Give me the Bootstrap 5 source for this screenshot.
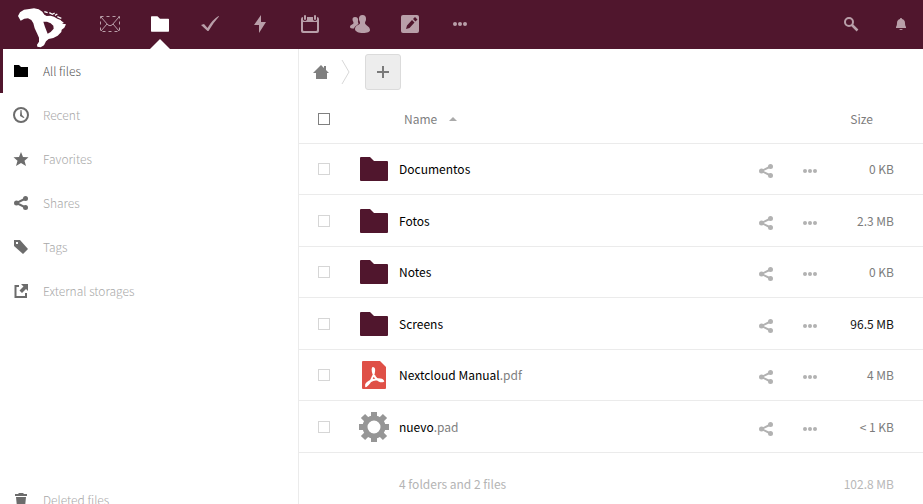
<!DOCTYPE html>
<html lang="en">
<head>
<meta charset="utf-8">
<meta name="viewport" content="width=device-width, initial-scale=1">
<title>Files</title>
<link rel="stylesheet" href="https://cdn.jsdelivr.net/npm/bootstrap@5.3.0/dist/css/bootstrap.min.css">
<style>
  body { font-family: "Noto Sans CJK SC", "Noto Sans", sans-serif; font-size: 12px; line-height: 20px; color: #000; }
  svg { display: block; flex: none; }
  .topbar { height: 49px; background: #50162d; }
  .brand-link { width: 85px; padding: 8px 0 0 18px; }
  .app-link, .tool { height: 49px; padding-bottom: 1px; color: #b99fa9; }
  .app-link { width: 50px; }
  .app-link.active { color: #fff; }
  .app-link.active::after { content: ""; position: absolute; bottom: 0; left: 50%; margin-left: -10px; border: 10px solid transparent; border-top-width: 0; border-bottom-color: #fff; }
  .tool { width: 44px; }
  .tools { gap: 6px; }
  .sidebar { width: 299px; border-right: 1px solid #ebebeb; }
  .side-link { height: 44px; padding-left: 10px; gap: 14px; border-left: 3px solid transparent; font-weight: 300; color: #a8a8a8; }
  .side-link svg { color: #6c6c6c; }
  .side-link.active { border-color: #50162d; color: #555; }
  .side-link.active svg { color: #000; }
  .side-foot { height: 26px; }
  .crumbs { height: 45px; padding: 0 14px; color: #7f7f7f; }
  .new-btn { width: 36px; height: 36px; margin-left: 12px; background: #ededed; border: 1px solid #dbdbdb; border-radius: 3px; color: #7a7a7a; }
  .files { table-layout: fixed; color: #000; }
  .files th, .files td { padding: 1px 0 0; vertical-align: middle; border-bottom: 1px solid #ebebeb; }
  .files thead tr { height: 49px; }
  .files tbody tr { height: 51px; }
  .files tbody tr:nth-child(even) { height: 52px; }
  .files tfoot tr { height: 62px; color: #b4b4b4; }
  .files tfoot td { border: 0; }
  .c-check { width: 50px; }
  .c-icon { width: 50px; }
  .c-act { width: 88px; }
  .c-size { width: 91px; }
  .tick { appearance: none; display: block; width: 12px; height: 12px; margin: 0 0 0 19px; border: 1px solid #d6d6d6; background: #fff; }
  .tick.all { border-color: #808080; }
  .tick:checked { background: #50162d; }
  .sort { gap: 12px; margin-left: 5px; font-size: 12px; line-height: 20px; color: #808080; }
  .files .size { padding-right: 29px; text-align: right; color: #7c7c7c; }
  .files thead .size { padding-right: 50px; }
  .files .size.large { color: #111; }
  .files tfoot .size { color: #b8b8b8; }
  .ext { color: #808080; }
  .act { width: 44px; height: 44px; color: #b2b2b2; }
  .maroon { color: #50162d; }
</style>
<script src="https://cdn.jsdelivr.net/npm/bootstrap@5.3.0/dist/js/bootstrap.bundle.min.js"></script>
</head>
<body class="vh-100 d-flex flex-column overflow-hidden">
<svg class="d-none" aria-hidden="true">
  <symbol id="folder" viewBox="0 0 28 24"><path fill="currentColor" d="M1 0h9l4 4h13q1 0 1 1v18q0 1-1 1H1q-1 0-1-1V1q0-1 1-1z"/></symbol>
  <symbol id="share" viewBox="0 0 16 16"><path d="M12.500 3.500L3.500 8l9 4.500" fill="none" stroke="currentColor" stroke-width="2"/><g fill="currentColor"><circle cx="12.500" cy="3.500" r="2.500"/><circle cx="3.500" cy="8" r="2.500"/><circle cx="12.500" cy="12.500" r="2.500"/></g></symbol>
  <symbol id="dots" viewBox="0 0 16 16"><g fill="currentColor"><circle cx="3" cy="8" r="2"/><circle cx="8" cy="8" r="2"/><circle cx="13" cy="8" r="2"/></g></symbol>
</svg>
<header class="topbar d-flex flex-shrink-0">
  <a class="brand-link" href="#" aria-label="Home">
    <svg width="48" height="40" viewBox="54 25 144 120"><path fill="#fff" fill-rule="evenodd" d="M54 49L60 38 72 30 88 28 102 26 116 29 127 36 133 45 140 49 152 48 162 51 172 57 182 61 188 72 198 74 193 84 185 90 184 97 173 108 160 115 146 118 138 125 132 137 122 143 112 141 111 135 117 126 117 114 111 101 104 86 100 71 94 61 84 56 73 57 62 63zM130 66L135 82 143 102 152 97 161 87 160 78 152 71 141 66z"/><path fill="none" stroke="#fff" stroke-width="4" d="M133 36l10 3M148 39l9 5 7-4M165 47l7-4M172 51l12 5M182 65l8 5M178 71l13 11"/></svg>
  </a>
  <nav class="d-flex" aria-label="Apps">
    <a class="app-link d-flex align-items-center justify-content-center" href="#" aria-label="Mail"><svg width="20" height="16" viewBox="0 0 20 16" fill="none" stroke="currentColor"><path d="M.500 .500h19v15H.500z" stroke-dasharray="3 3"/><path d="M1 1l7 8q2 1.500 4 0l7-8M1 15l6-7M19 15l-6-7"/></svg></a>
    <a class="app-link active position-relative d-flex align-items-center justify-content-center" href="#" aria-label="Files" aria-current="page"><svg width="18" height="16"><use href="#folder"/></svg></a>
    <a class="app-link d-flex align-items-center justify-content-center" href="#" aria-label="Tasks"><svg width="20" height="18" viewBox="0 0 20 18"><path fill="currentColor" d="M1 10l3-1 3.500 4Q12 5 18.500 1l.5.500Q13 8 8.500 16H7.500z"/></svg></a>
    <a class="app-link d-flex align-items-center justify-content-center" href="#" aria-label="Activity"><svg width="14" height="20" viewBox="0 0 14 20"><path fill="currentColor" d="M8 1L1 11h5l0 8 7-11H8z"/></svg></a>
    <a class="app-link d-flex align-items-center justify-content-center" href="#" aria-label="Calendar"><svg width="18" height="18" viewBox="0 0 18 18"><path fill="currentColor" fill-rule="evenodd" d="M2 2h0v3q2 2 4 0V2h6v3q2 2 4 0V2q2 0 2 2v12q0 2-2 2H2q-2 0-2-2V4q0-2 2-2zM2 7v8q0 1 1 1h12q1 0 1-1V7z"/><path stroke="currentColor" stroke-width="2" stroke-linecap="round" d="M4 1v3M14 1v3"/></svg></a>
    <a class="app-link d-flex align-items-center justify-content-center" href="#" aria-label="Contacts"><svg width="20" height="20" viewBox="0 0 20 20"><path fill="currentColor" d="M12.500 1c-2.500 0-4 1.800-3.500 4.500.2 1.500 1 2 1 3.500 0 2-5 2-5 6 0 2.500 3.500 4 8 4s7-1 7-3c0-4-5-4.500-5-7 0-1.500 1-2 1-3.500.4-2.700-1-4.500-3.500-4.500zM5 3C3 3 2.500 4.300 2.500 5.500 2.500 7 3.500 7.500 3.500 9c0 1.500-3.500 1.500-3.500 4 0 1 1.500 1.500 4 1.500 1-3 4-3.500 4.500-5 0-1-.8-1-.5-2.500.6-2.500-.7-4-3-4z"/></svg></a>
    <a class="app-link d-flex align-items-center justify-content-center" href="#" aria-label="Notes"><svg width="18" height="18" viewBox="0 0 18 18"><rect width="18" height="18" rx="2" fill="currentColor"/><path fill="#50162d" d="M14 2l2.500 2.500-2 2L12 4zM11 5l2.500 2.500L8.500 13 5 14l1-3.500z"/></svg></a>
    <a class="app-link d-flex align-items-center justify-content-center" href="#" aria-label="More apps"><svg width="16" height="16"><use href="#dots"/></svg></a>
  </nav>
  <div class="tools d-flex ms-auto">
    <button class="tool btn pt-0 px-0 border-0 d-flex align-items-center justify-content-center" aria-label="Search"><svg width="16" height="16" viewBox="0 0 16 16" fill="none" stroke="currentColor" stroke-width="2"><circle cx="6" cy="6" r="4"/><path stroke-width="2.500" d="M9 9l5.500 5.500"/></svg></button>
    <button class="tool btn pt-0 px-0 border-0 d-flex align-items-center justify-content-center" aria-label="Notifications"><svg width="12" height="14" viewBox="0 0 12 14"><path fill="currentColor" d="M6 1C5.300 1 5 1.500 5 2 3 2.500 2 4 2 6 2 8 1.500 9 1 10v1h10v-1C10.500 9 10 8 10 6 10 4 9 2.500 7 2 7 1.500 6.700 1 6 1zM4 12h4q-2 2-4 0z"/></svg></button>
  </div>
</header>
<div class="d-flex flex-grow-1 overflow-hidden">
  <nav class="sidebar d-flex flex-column flex-shrink-0" aria-label="Views">
    <a class="side-link active d-flex align-items-center text-decoration-none" href="#"><svg width="16" height="16" viewBox="0 0 16 16"><path fill="currentColor" d="M1 2h5l2 2h7v10H1z"/></svg>All files</a>
    <a class="side-link d-flex align-items-center text-decoration-none" href="#"><svg width="16" height="16" viewBox="0 0 16 16"><circle cx="8" cy="8" r="7" fill="none" stroke="currentColor" stroke-width="2"/><path fill="currentColor" d="M7.500 3h1l.5 5 2.500 2.500-1 .5L7 9z"/></svg>Recent</a>
    <a class="side-link d-flex align-items-center text-decoration-none" href="#"><svg width="16" height="16" viewBox="0 0 16 16"><path fill="currentColor" d="M8 1l2 5 5.500.3-4 3.500L13 15l-5-3-5 3 1.500-5.200-4-3.500L6 6z"/></svg>Favorites</a>
    <a class="side-link d-flex align-items-center text-decoration-none" href="#"><svg width="16" height="16"><use href="#share"/></svg>Shares</a>
    <a class="side-link d-flex align-items-center text-decoration-none" href="#"><svg width="16" height="16" viewBox="0 0 16 16"><path fill="currentColor" fill-rule="evenodd" d="M1 1h6l8 9-5 5-9-8zM3 3v2h2V3z"/></svg>Tags</a>
    <a class="side-link d-flex align-items-center text-decoration-none" href="#"><svg width="16" height="16" viewBox="0 0 16 16"><path fill="none" stroke="currentColor" stroke-width="2" d="M6 3H2.500v11H13V10"/><path fill="currentColor" d="M8 1h7v7l-2-2-4 4-2.500-2.500 4-4z"/></svg>External storages</a>
    <div class="side-foot mt-auto overflow-hidden">
      <a class="side-link d-flex align-items-center text-decoration-none" href="#"><svg width="16" height="16" viewBox="0 0 16 16"><path fill="currentColor" d="M6 1h4l1 1h3v2H2V2h3zM3 5h10l-1 10H4z"/></svg>Deleted files</a>
    </div>
  </nav>
  <main class="flex-grow-1 overflow-hidden">
    <div class="crumbs d-flex align-items-center">
      <a class="text-reset" href="#" aria-label="Home folder"><svg width="16" height="16" viewBox="0 0 16 16"><path fill="currentColor" d="M8 1l3 3V2h2v4l3 3h-2v6H3V9H0z"/></svg></a>
      <svg class="ms-2" width="16" height="26" viewBox="0 0 16 26" fill="none" stroke="#d8d8d8"><path d="M5 1l7 12-7 12"/></svg>
      <button class="new-btn btn p-0 d-flex align-items-center justify-content-center" aria-label="New"><svg width="12" height="12" viewBox="0 0 12 12"><path stroke="currentColor" stroke-width="2" d="M6 0v12M0 6h12"/></svg></button>
    </div>
    <table class="files w-100">
      <colgroup><col class="c-check"><col class="c-icon"><col><col class="c-act"><col class="c-size"></colgroup>
      <thead>
        <tr><th><input class="tick all" type="checkbox" aria-label="Select all"></th><th></th>
          <th class="fw-normal"><button class="sort btn p-0 border-0 d-flex align-items-center"><span>Name</span><svg width="8" height="4" viewBox="0 0 8 4"><path fill="#aaa" d="M4 0l4 4H0z"/></svg></button></th><th></th><th class="size fw-normal">Size</th></tr>
      </thead>
      <tbody>
        <tr><td><input class="tick" type="checkbox" aria-label="Select Documentos"></td><td><svg class="maroon mx-auto" width="28" height="24"><use href="#folder"/></svg></td><td>Documentos</td>
          <td><div class="d-flex pt-1"><button class="act btn p-0 border-0 d-flex align-items-center justify-content-center" aria-label="Share"><svg width="16" height="16"><use href="#share"/></svg></button><button class="act btn p-0 border-0 d-flex align-items-center justify-content-center" aria-label="More"><svg width="16" height="16"><use href="#dots"/></svg></button></div></td><td class="size">0 KB</td></tr>
        <tr><td><input class="tick" type="checkbox" aria-label="Select Fotos"></td><td><svg class="maroon mx-auto" width="28" height="24"><use href="#folder"/></svg></td><td>Fotos</td>
          <td><div class="d-flex pt-1"><button class="act btn p-0 border-0 d-flex align-items-center justify-content-center" aria-label="Share"><svg width="16" height="16"><use href="#share"/></svg></button><button class="act btn p-0 border-0 d-flex align-items-center justify-content-center" aria-label="More"><svg width="16" height="16"><use href="#dots"/></svg></button></div></td><td class="size">2.3 MB</td></tr>
        <tr><td><input class="tick" type="checkbox" aria-label="Select Notes"></td><td><svg class="maroon mx-auto" width="28" height="24"><use href="#folder"/></svg></td><td>Notes</td>
          <td><div class="d-flex pt-1"><button class="act btn p-0 border-0 d-flex align-items-center justify-content-center" aria-label="Share"><svg width="16" height="16"><use href="#share"/></svg></button><button class="act btn p-0 border-0 d-flex align-items-center justify-content-center" aria-label="More"><svg width="16" height="16"><use href="#dots"/></svg></button></div></td><td class="size">0 KB</td></tr>
        <tr><td><input class="tick" type="checkbox" aria-label="Select Screens"></td><td><svg class="maroon mx-auto" width="28" height="24"><use href="#folder"/></svg></td><td>Screens</td>
          <td><div class="d-flex pt-1"><button class="act btn p-0 border-0 d-flex align-items-center justify-content-center" aria-label="Share"><svg width="16" height="16"><use href="#share"/></svg></button><button class="act btn p-0 border-0 d-flex align-items-center justify-content-center" aria-label="More"><svg width="16" height="16"><use href="#dots"/></svg></button></div></td><td class="size large">96.5 MB</td></tr>
        <tr><td><input class="tick" type="checkbox" aria-label="Select Nextcloud Manual.pdf"></td><td><svg class="mx-auto" width="24" height="28" viewBox="0 0 24 28"><path fill="#df5047" d="M1 0h17l6 6v21q0 1-1 1H1q-1 0-1-1V1q0-1 1-1z"/><path fill="none" stroke="#fff" stroke-width="2" stroke-linecap="round" d="M11 7c2 0 1 5 0 8-2 5-5 9-7 10-1-2 2-4 7-6 4-1 9-1 10 1-2 1-6-1-8-4-2-3-3-8-2-9z"/></svg></td><td>Nextcloud Manual<span class="ext">.pdf</span></td>
          <td><div class="d-flex pt-1"><button class="act btn p-0 border-0 d-flex align-items-center justify-content-center" aria-label="Share"><svg width="16" height="16"><use href="#share"/></svg></button><button class="act btn p-0 border-0 d-flex align-items-center justify-content-center" aria-label="More"><svg width="16" height="16"><use href="#dots"/></svg></button></div></td><td class="size">4 MB</td></tr>
        <tr><td><input class="tick" type="checkbox" aria-label="Select nuevo.pad"></td><td><svg class="mx-auto" width="30" height="30" viewBox="-15 -15 30 30"><g stroke="#969696" stroke-width="6"><path d="M0-15v5M0 10v5M-15 0h5M10 0h5M-11-11l4 4M11-11l-4 4M-11 11l4-4M11 11l-4-4"/><circle r="9" fill="none" stroke-width="5"/></g></svg></td><td>nuevo<span class="ext">.pad</span></td>
          <td><div class="d-flex pt-1"><button class="act btn p-0 border-0 d-flex align-items-center justify-content-center" aria-label="Share"><svg width="16" height="16"><use href="#share"/></svg></button><button class="act btn p-0 border-0 d-flex align-items-center justify-content-center" aria-label="More"><svg width="16" height="16"><use href="#dots"/></svg></button></div></td><td class="size">&lt; 1 KB</td></tr>
      </tbody>
      <tfoot>
        <tr><td></td><td></td><td>4 folders and 2 files</td><td></td><td class="size">102.8 MB</td></tr>
      </tfoot>
    </table>
  </main>
</div>
</body>
</html>
